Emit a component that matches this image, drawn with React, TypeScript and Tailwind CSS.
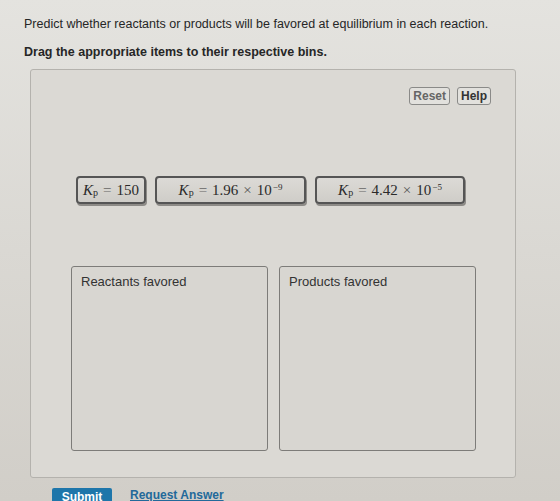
import React from "react";

const sans = { fontFamily: '"Liberation Sans", Arial, sans-serif' };
const serif = { fontFamily: '"Liberation Serif", "Times New Roman", serif' };

function Kp({ value, exp }: { value: string; exp?: string }) {
  return (
    <span style={serif} className="text-[15px] text-[#2a2a2a] whitespace-nowrap">
      <i>K</i>
      <sub className="text-[10px] relative top-[1px]">p</sub>
      <span className="text-[#666] mx-[5px]">=</span>
      {value}
      {exp && (
        <>
          <span className="text-[#555] mx-[5px]">×</span>10
          <sup className="text-[9px] ml-[1px]">{exp}</sup>
        </>
      )}
    </span>
  );
}

function Tile({ w, children }: { w: string; children: React.ReactNode }) {
  return (
    <div
      className={`${w} h-[28px] flex items-center justify-center rounded-[4px] border-2 border-[#555] bg-gradient-to-b from-[#dcdad6] to-[#cfcdc8] shadow-[1px_2px_0_#8d8b87]`}
    >
      {children}
    </div>
  );
}

function Bin({ label }: { label: string }) {
  return (
    <div className="w-[197px] h-[185px] rounded-[3px] border-[1.5px] border-[#7d7c79] bg-[#d8d6d1] px-[9px] pt-[5px]">
      <div style={sans} className="text-[13px] text-[#333]">
        {label}
      </div>
    </div>
  );
}

export default function App() {
  return (
    <div
      style={sans}
      className="w-[560px] h-[501px] overflow-hidden bg-gradient-to-b from-[#e4e3df] via-[#dad8d3] to-[#d1cec8] pl-[24px] pt-[16px]"
    >
      <div className="text-[12.5px] leading-[16px] text-[#262626]">
        Predict whether reactants or products will be favored at equilibrium in each reaction.
      </div>
      <div className="mt-[12px] text-[12.5px] leading-[16px] font-bold text-[#262626]">
        Drag the appropriate items to their respective bins.
      </div>

      <div className="mt-[9px] ml-[6px] w-[486px] h-[409px] rounded-[3px] border border-[#b4b2ad] bg-[#dbd9d4] flex flex-col">
        <div className="flex justify-end gap-[7px] pt-[17px] pr-[24px]">
          <button className="h-[18px] px-[3px] rounded-[3px] border border-[#8a8a88] bg-[#e2e1dd] text-[12px] font-bold text-[#666] leading-none">
            Reset
          </button>
          <button className="h-[18px] px-[3px] rounded-[3px] border border-[#8a8a88] bg-[#e2e1dd] text-[12px] font-bold text-[#333] leading-none">
            Help
          </button>
        </div>

        <div className="flex gap-[9px] mt-[71px] pl-[45px]">
          <Tile w="w-[70px]">
            <Kp value="150" />
          </Tile>
          <Tile w="w-[151px]">
            <Kp value="1.96" exp="−9" />
          </Tile>
          <Tile w="w-[150px]">
            <Kp value="4.42" exp="−5" />
          </Tile>
        </div>

        <div className="flex gap-[11px] mt-[62px] pl-[40px]">
          <Bin label="Reactants favored" />
          <Bin label="Products favored" />
        </div>
      </div>

      <div className="flex items-start gap-[18px] mt-[10px] ml-[28px]">
        <button className="w-[60px] h-[18px] rounded-[2px] bg-[#1e76aa] text-white text-[12px] font-bold leading-none flex items-center justify-center">
          Submit
        </button>
        <span className="text-[12px] leading-[12px] font-bold text-[#23699a] underline mt-[1px]">Request Answer</span>
      </div>
    </div>
  );
}
